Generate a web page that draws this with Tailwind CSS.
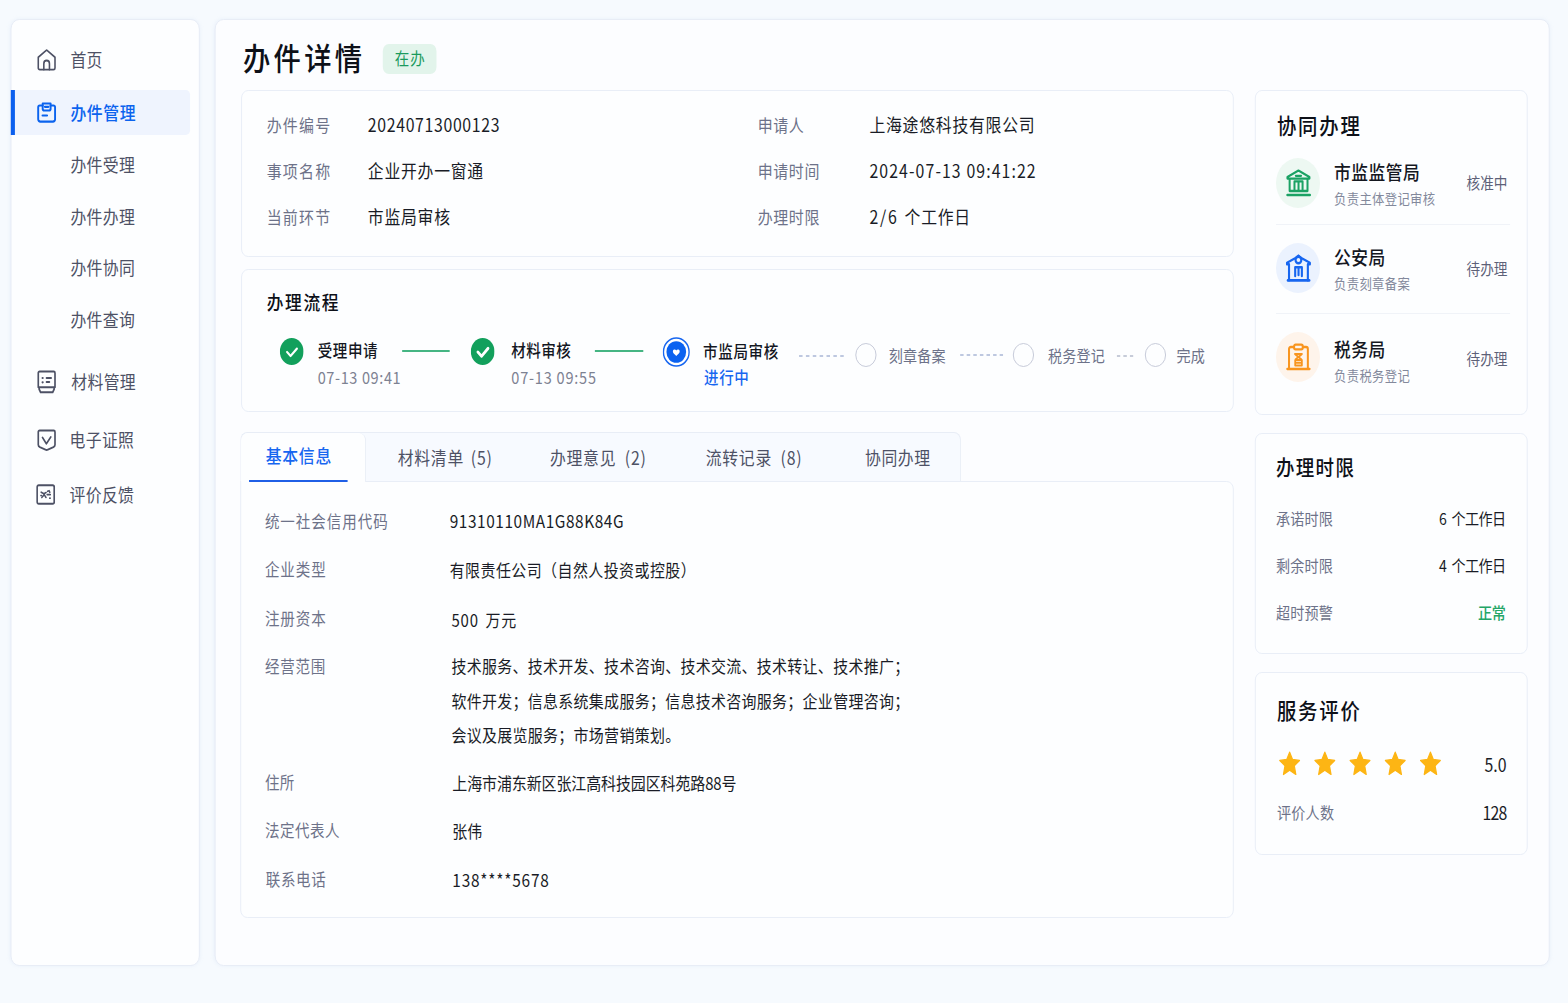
<!DOCTYPE html>
<html lang="zh-CN">
<head>
  <meta charset="UTF-8">
  <meta name="viewport" content="width=device-width, initial-scale=1.0">
  <title>办件详情</title>
  <script src="https://cdn.jsdelivr.net/npm/@tailwindcss/browser@4"></script>
</head>
<body class="h-[1003px] overflow-hidden bg-[#f6fafe] font-['Noto_Sans_CJK_SC',sans-serif] text-[#191c26]">
  <!-- The layout is condensed horizontally -->
  <div class="flex h-[1003px] w-[1781px] origin-top-left scale-x-[0.88] items-start gap-[17px] pt-[19px] pl-[12px]">

    <!-- Sidebar -->
    <nav class="h-[947px] w-[215px] shrink-0 rounded-[10px] border border-[#e6ecf5] bg-[#fdfeff] pt-[9px] text-[18px] tracking-[0.4px] text-[#4d5165] shadow-[0_0_4px_rgba(200,215,240,0.25)]">
      <a class="flex h-[61px] items-center gap-4 pl-[29px]">
        <svg class="h-[22px] w-[22px]" viewBox="0 0 22 22" fill="none" stroke="currentColor" stroke-width="1.8" stroke-linejoin="round" stroke-linecap="round"><path d="M1.5 8.2 10.2 1.6a1.3 1.3 0 0 1 1.6 0L20.5 8.2V19a1.7 1.7 0 0 1-1.7 1.7H3.2A1.7 1.7 0 0 1 1.5 19z"/><path d="M7.8 20.5v-5.8a3.2 3.2 0 0 1 6.4 0v5.8"/></svg>
        <span class="pb-px">首页</span>
      </a>
      <a class="-ml-px flex h-[45px] w-[204px] items-center gap-4 rounded-r-[5px] border-l-[5px] border-[#0b5fee] bg-[#eff4fe] pl-[25px] font-medium tracking-[0.7px] text-[#0b63ee]">
        <svg class="h-[22px] w-[22px]" viewBox="0 0 22 22" fill="none" stroke="currentColor" stroke-width="2.2" stroke-linejoin="round" stroke-linecap="round"><path d="M6.5 3.5H3.2a1.8 1.8 0 0 0-1.8 1.8v11.9a2.4 2.4 0 0 0 2.4 2.4h14.4a2.4 2.4 0 0 0 2.4-2.4V5.3a1.8 1.8 0 0 0-1.8-1.8h-3.3"/><path d="M6.5 1.5h9v5.3a1.7 1.7 0 0 1-1.7 1.7H8.2a1.7 1.7 0 0 1-1.7-1.7zM9 4.8h4M6.3 13.5h5.2"/></svg>
        <span class="pb-px">办件管理</span>
      </a>
      <div class="mt-[4px] pl-[67px]">
        <a class="flex h-[51.5px] items-center">办件受理</a>
        <a class="flex h-[51.5px] items-center">办件办理</a>
        <a class="flex h-[51.5px] items-center">办件协同</a>
        <a class="flex h-[51.5px] items-center">办件查询</a>
      </div>
      <a class="mt-[9px] flex h-[56px] items-center gap-4 pl-[29px]">
        <svg class="h-[24px] w-[22px]" viewBox="0 0 22 24" fill="none" stroke="currentColor" stroke-width="1.9" stroke-linejoin="round" stroke-linecap="round"><path d="M3 1.5h16a1.5 1.5 0 0 1 1.5 1.5v14.2h-19V3A1.5 1.5 0 0 1 3 1.5zM2.5 17.5v1.7l1.6 3.1h13.8l1.6-3.1v-1.7"/><path stroke-width="2.2" d="M6.3 8h.3M6.3 12.3h.3M11 8h5M11 12h3"/></svg>
        <span class="pb-px pl-px">材料管理</span>
      </a>
      <a class="flex h-[60px] items-center gap-4 pl-[29px]">
        <svg class="h-[22px] w-[22px]" viewBox="0 0 22 22" fill="none" stroke="currentColor" stroke-width="1.9" stroke-linejoin="round" stroke-linecap="round"><path d="M3 1.5h16a1.5 1.5 0 0 1 1.5 1.5v12.8c0 1.2-.7 1.9-1.8 2.4l-6.3 2.5a4 4 0 0 1-2.8 0l-6.3-2.5c-1.1-.5-1.8-1.2-1.8-2.4V3A1.5 1.5 0 0 1 3 1.5z"/><path d="m6.3 8.5 4.4 6.2 5-6.7"/></svg>
        <span class="-ml-px pb-px">电子证照</span>
      </a>
      <a class="flex h-[49px] items-center gap-4 pl-[28px]">
        <svg class="h-[21px] w-[22px]" viewBox="0 0 22 21" fill="none" stroke="currentColor" stroke-width="1.9" stroke-linejoin="round" stroke-linecap="round"><rect x="1.2" y="1.2" width="19.4" height="18.6" rx="1.8"/><path stroke-width="1.7" d="m5.8 8.2 3 1.6 2.6-1.2M6.5 13.5l2.8-2.8 2 2.7M13 7.3l1.8-.6.8 1.6M12.6 10.6h3.6M15.5 14.2h.5M5.5 11.5h.6"/></svg>
        <span class="pb-px">评价反馈</span>
      </a>
    </nav>

    <!-- Content -->
    <main class="h-[947px] w-[1517px] shrink-0 rounded-[10px] border border-[#e6ecf5] bg-[#fcfdff] pl-[29px] shadow-[0_0_4px_rgba(200,215,240,0.25)]">
      <header class="flex h-[70px] items-center gap-[20px] pt-[6px] pl-[2px]">
        <h1 class="pb-[2px] text-[31px] leading-[40px] font-medium tracking-[3.8px] text-[#0d1018]">办件详情</h1>
        <span class="mt-px flex h-[30px] w-[61px] items-center justify-center rounded-[7px] bg-[#e2f4eb] pl-px text-[16.5px] tracking-[1px] text-[#1b9a5d]">在办</span>
      </header>

      <div class="flex items-start gap-[24px]">
        <div class="w-[1128px] shrink-0">
          <!-- Summary -->
          <section class="grid h-[167px] auto-rows-[46px] grid-cols-[114px_444px_126px_1fr] items-center rounded-[8px] border border-[#e8edf6] bg-[#fdfeff] pt-[10px] pl-[28px] text-[18px] tracking-[0.85px]">
            <span class="pt-px text-[17px] tracking-[1.4px] text-[#6d7289]">办件编号</span><span class="pl-px tracking-[0.75px]">20240713000123</span>
            <span class="pt-px text-[17px] tracking-[0.7px] text-[#6d7289]">申请人</span><span class="pl-px">上海途悠科技有限公司</span>
            <span class="pt-px text-[17px] tracking-[1.4px] text-[#6d7289]">事项名称</span><span class="pl-px">企业开办一窗通</span>
            <span class="pt-px text-[17px] tracking-[0.7px] text-[#6d7289]">申请时间</span><span class="pl-px tracking-[1.25px]">2024-07-13 09:41:22</span>
            <span class="pt-px text-[17px] tracking-[1.4px] text-[#6d7289]">当前环节</span><span class="pl-px">市监局审核</span>
            <span class="pt-px text-[17px] tracking-[0.7px] text-[#6d7289]">办理时限</span><span class="pl-px"><span class="tracking-[2px]">2/6</span> <span class="pl-[2px]">个工作日</span></span>
          </section>

          <!-- Progress -->
          <section class="mt-[12px] h-[143px] rounded-[8px] border border-[#e8edf6] bg-[#fdfeff] pt-[18px]">
            <h2 class="pl-[28px] text-[19px] leading-[28px] font-medium tracking-[1.9px] text-[#0d1018]">办理流程</h2>
            <div class="mt-[21px] flex items-start pl-[43px] text-[16.5px] leading-[27px] tracking-[0.7px] whitespace-nowrap">
              <svg class="mt-px h-[27px] w-[27px] shrink-0" viewBox="0 0 27 27"><circle cx="13.5" cy="13.5" r="13.5" fill="#12a05c"/><path d="m8.2 14 4 4 7.2-7.4" fill="none" stroke="#fff" stroke-width="2.3" stroke-linecap="round" stroke-linejoin="round"/></svg>
              <div class="ml-[16px] w-[96px] shrink-0">
                <div class="font-medium text-[#14171f]">受理申请</div>
                <div class="text-[#7d8292]">07-13 09:41</div>
              </div>
              <div class="mt-[13px] h-[2px] w-[54px] shrink-0 bg-[#45b583]"></div>
              <svg class="mt-px ml-[24px] h-[27px] w-[27px] shrink-0" viewBox="0 0 27 27"><circle cx="13.5" cy="13.5" r="13.5" fill="#12a05c"/><path d="m8 14 4.2 4.2 7.4-7.8" fill="none" stroke="#fff" stroke-width="3" stroke-linecap="round" stroke-linejoin="round"/></svg>
              <div class="ml-[19px] w-[95px] shrink-0">
                <div class="font-medium tracking-[0.5px] text-[#14171f]">材料审核</div>
                <div class="tracking-[0.9px] text-[#7d8292]">07-13 09:55</div>
              </div>
              <div class="mt-[13px] h-[2px] w-[55px] shrink-0 bg-[#45b583]"></div>
              <svg class="ml-[22px] h-[30px] w-[31px] shrink-0" viewBox="0 0 31 30"><ellipse cx="15.5" cy="15" rx="14.6" ry="14" fill="#fff" stroke="#1766f0" stroke-width="1.6"/><ellipse cx="15.5" cy="15" rx="11.2" ry="10.8" fill="#0b62f0"/><path d="M11.6 14.3c0-2.2 3-2.5 3.9-.9.9-1.6 3.9-1.3 3.9.9 0 2-2.1 3.3-3.9 4.6-1.8-1.3-3.9-2.6-3.9-4.6z" fill="#fff"/></svg>
              <div class="ml-[15px] w-[109px] shrink-0 font-medium">
                <div class="pt-px text-[#14171f]">市监局审核</div>
                <div class="-mt-px pl-px text-[#1766f0]">进行中</div>
              </div>
              <svg class="mt-[18px] h-[2px] w-[51px] shrink-0" viewBox="0 0 51 2"><path d="M0 1h51" stroke="#a9b7d6" stroke-width="1.6" stroke-dasharray="4 3.8"/></svg>
              <div class="mt-[6px] ml-[13px] h-[24px] w-[24px] shrink-0 rounded-full border border-[#c3c8d6]"></div>
              <div class="mt-[5px] ml-[14px] w-[81px] shrink-0 text-[16px] tracking-[0.2px] text-[#6d7289]">刻章备案</div>
              <svg class="mt-[17px] h-[2px] w-[49px] shrink-0" viewBox="0 0 49 2"><path d="M0 1h49" stroke="#a9b7d6" stroke-width="1.6" stroke-dasharray="4 3.5"/></svg>
              <div class="mt-[6px] ml-[11px] h-[24px] w-[24px] shrink-0 rounded-full border border-[#c3c8d6]"></div>
              <div class="mt-[5px] ml-[16px] w-[78px] shrink-0 text-[16px] tracking-[0.2px] text-[#6d7289]">税务登记</div>
              <svg class="mt-[18px] h-[2px] w-[19px] shrink-0" viewBox="0 0 19 2"><path d="M0 1h19" stroke="#b5bccd" stroke-width="1.6" stroke-dasharray="4 3.5"/></svg>
              <div class="mt-[6px] ml-[13px] h-[24px] w-[24px] shrink-0 rounded-full border border-[#c3c8d6]"></div>
              <div class="mt-[5px] ml-[12px] text-[16px] tracking-[0px] text-[#6d7289]">完成</div>
            </div>
          </section>

          <!-- Tabs -->
          <div class="mt-[20px] -ml-px flex h-[50px] w-[819px] rounded-t-[8px] border border-b-0 border-[#e8edf6] bg-[#f7faff] text-[18px] leading-[49px] tracking-[0.8px] whitespace-nowrap text-[#4d5165] [word-spacing:3px]">
            <div class="flex w-[142px] shrink-0 flex-col rounded-t-[8px] border-r border-[#e8edf6] bg-[#fdfeff] pl-[9px]">
              <span class="h-[47px] pl-[19px] leading-[45px] font-medium text-[#1766f0]">基本信息</span>
              <span class="z-10 h-[2.5px] w-[112px] bg-[#1f5fe6]"></span>
            </div>
            <span class="w-[173px] shrink-0 pl-[36px]">材料清单 (5)</span>
            <span class="w-[177px] shrink-0 pl-[36px] [word-spacing:5px]">办理意见 (2)</span>
            <span class="w-[181px] shrink-0 pl-[36px] [word-spacing:5px]">流转记录 (8)</span>
            <span class="pl-[36px] tracking-[0.6px]">协同办理</span>
          </div>

          <!-- Basic info -->
          <section class="-mt-px -ml-px h-[437px] w-[1129px] rounded-[8px] rounded-tl-none border border-[#e8edf6] bg-[#fdfeff] pt-[15px] pl-[27px] text-[17px] tracking-[0.5px]">
            <div class="flex h-[48px] items-center"><span class="w-[210px] text-[16.5px] tracking-[1.1px] text-[#6d7289]">统一社会信用代码</span><span class="pt-px text-[17.5px] tracking-[0.65px]">91310110MA1G88K84G</span></div>
            <div class="flex h-[48px] items-center"><span class="w-[210px] text-[16.5px] tracking-[1.1px] text-[#6d7289]">企业类型</span><span class="pt-px">有限责任公司（自然人投资或控股）</span></div>
            <div class="flex h-[49px] items-center"><span class="w-[212px] pt-px text-[16.5px] tracking-[1.1px] text-[#6d7289]">注册资本</span><span class="pt-[4px] tracking-[0.9px] [word-spacing:3px]">500 万元</span></div>
            <div class="mt-[7px] flex leading-[34.5px]">
              <span class="w-[212px] text-[16.5px] tracking-[0.9px] text-[#6d7289]">经营范围</span>
              <p class="tracking-[0.35px]">技术服务、技术开发、技术咨询、技术交流、技术转让、技术推广；<br>软件开发；信息系统集成服务；信息技术咨询服务；企业管理咨询；<br>会议及展览服务；市场营销策划。</p>
            </div>
            <div class="mt-[6px] flex h-[48px] items-center"><span class="w-[212px] text-[16.5px] text-[#6d7289]">住所</span><span class="pl-px tracking-[-0.1px]">上海市浦东新区张江高科技园区科苑路88号</span></div>
            <div class="flex h-[48px] items-center"><span class="w-[212px] text-[16.5px] tracking-[0.6px] text-[#6d7289]">法定代表人</span><span class="pl-px tracking-[0]">张伟</span></div>
            <div class="flex h-[49px] items-center"><span class="w-[212px] pt-px pl-px text-[16.5px] tracking-[0.7px] text-[#6d7289]">联系电话</span><span class="pt-[3px] pl-px text-[17.5px] tracking-[0.9px]">138****5678</span></div>
          </section>
        </div>

        <!-- Right column -->
        <aside class="-mt-[0.5px] w-[310px] shrink-0">
          <section class="h-[325px] rounded-[8px] border border-[#e8edf6] bg-[#fdfeff] pt-[16px] pr-[19px] pl-[23px]">
            <h2 class="mb-px pl-px text-[22px] leading-[35px] font-medium tracking-[2.1px] text-[#0d1018]">协同办理</h2>
            <div class="flex h-[82px] items-center border-b border-[#f0f3f8] pr-[3px]">
              <span class="flex h-[50px] w-[50px] items-center justify-center rounded-full bg-[#edf8f2] text-[#1ba264]">
                <svg class="h-[28px] w-[29px]" viewBox="0 0 29 28" fill="none" stroke="currentColor" stroke-width="2.3" stroke-linecap="round" stroke-linejoin="round"><path d="M2 8 14.5 1.6 27 8v1.6H2zM4.5 10v11.5M24.8 10v11.5M4.5 22h20.3M10 12.4V22M14.6 12.4V22M19.2 12.4V22M10 12.4h9.2M11.5 6.8h6"/><path stroke-width="2.6" d="M2 26h25.5"/></svg>
              </span>
              <div class="ml-[16px] pt-[2px] whitespace-nowrap">
                <div class="text-[19px] leading-[27px] font-medium tracking-[0.6px] text-[#14171f]">市监监管局</div>
                <div class="text-[14px] leading-[26px] tracking-[0.4px] text-[#83899c]">负责主体登记审核</div>
              </div>
              <span class="ml-auto pb-px text-[15.5px] text-[#5d6178]">核准中</span>
            </div>
            <div class="flex h-[89px] items-center border-b border-[#f0f3f8] pr-[3px]">
              <span class="mb-[2px] flex h-[50px] w-[50px] items-center justify-center rounded-full bg-[#ebf2fe] text-[#1766f0]">
                <svg class="h-[28px] w-[29px]" viewBox="0 0 29 28" fill="none" stroke="currentColor" stroke-width="2.4" stroke-linecap="round" stroke-linejoin="round"><path d="m10.7 4.2-9.2 4.6v1.4h2.3v16M18.3 4.2l9.2 4.6v1.4h-2.3v16M11 4.2l3.5-2.6L18 4.2"/><circle cx="14.5" cy="6" r="3.3"/><path d="M10.8 22V13.2h7.6V22M14.6 13.5V21"/><path stroke-width="2.6" d="M2.5 26.4h24.3"/></svg>
              </span>
              <div class="ml-[16px] pt-[2px] whitespace-nowrap">
                <div class="text-[19px] leading-[27px] font-medium tracking-[0.6px] text-[#14171f]">公安局</div>
                <div class="text-[14px] leading-[26px] tracking-[0.4px] text-[#83899c]">负责刻章备案</div>
              </div>
              <span class="ml-auto pt-px text-[15.5px] text-[#5d6178]">待办理</span>
            </div>
            <div class="flex h-[87px] items-center pr-[3px]">
              <span class="flex h-[50px] w-[50px] items-center justify-center rounded-full bg-[#fef4eb] text-[#f8951f]">
                <svg class="h-[28px] w-[29px]" viewBox="0 0 29 28" fill="none" stroke="currentColor" stroke-width="2.3" stroke-linecap="round" stroke-linejoin="round"><path d="M9.5 4H5.8a2 2 0 0 0-2 2v19.5M19.5 4h3.7a2 2 0 0 1 2 2v19.5M1.8 26h25.4"/><rect x="9.6" y="1.6" width="9.8" height="4.8" rx="1.6"/><path stroke-width="2" d="M10.5 11h8M11 11.5l7 5M18 11.5l-7 5M10.8 17h7.6v5.6h-7.6zM11 19.8h7"/></svg>
              </span>
              <div class="ml-[16px] pt-[8px] whitespace-nowrap">
                <div class="text-[19px] leading-[27px] font-medium tracking-[0.6px] text-[#14171f]">税务局</div>
                <div class="text-[14px] leading-[26px] tracking-[0.4px] text-[#83899c]">负责税务登记</div>
              </div>
              <span class="ml-auto pt-[3px] text-[15.5px] text-[#5d6178]">待办理</span>
            </div>
          </section>

          <section class="mt-[18px] h-[221px] rounded-[8px] border border-[#e8edf6] bg-[#fdfeff] pt-[15px] pr-[24px] pl-[23px]">
            <h2 class="text-[21px] leading-[35px] font-medium tracking-[1.5px] text-[#0d1018]">办理时限</h2>
            <div class="mt-[11px] text-[16px] tracking-[0.2px]">
              <div class="flex h-[47px] items-center justify-between"><span class="text-[#6d7289]">承诺时限</span><span class="tracking-[-0.6px]">6&nbsp; 个工作日</span></div>
              <div class="flex h-[47px] items-center justify-between"><span class="text-[#6d7289]">剩余时限</span><span class="tracking-[-0.6px]">4&nbsp; 个工作日</span></div>
              <div class="flex h-[47px] items-center justify-between"><span class="text-[#6d7289]">超时预警</span><span class="font-medium tracking-[-0.3px] text-[#23a566]">正常</span></div>
            </div>
          </section>

          <section class="mt-[18px] h-[183px] rounded-[8px] border border-[#e8edf6] bg-[#fdfeff] pt-[19px] pr-[23px] pl-[24px]">
            <h2 class="text-[22px] leading-[35px] font-medium tracking-[2.1px] text-[#0d1018]">服务评价</h2>
            <div class="mt-[14px] flex h-[48px] items-center justify-between">
              <div class="mb-[3px] flex gap-[15px] pl-[2px] text-[#fdb514]">
                <svg class="h-[25px] w-[25px]" viewBox="0 0 25 25" fill="currentColor" stroke="currentColor" stroke-width="1.4" stroke-linejoin="round"><path d="m12.5 1.2 3.3 7.3 7.9.9-5.9 5.4 1.7 8.6-7-4.2-7 4.2 1.7-8.6-5.9-5.4 7.9-.9z"/></svg>
                <svg class="h-[25px] w-[25px]" viewBox="0 0 25 25" fill="currentColor" stroke="currentColor" stroke-width="1.4" stroke-linejoin="round"><path d="m12.5 1.2 3.3 7.3 7.9.9-5.9 5.4 1.7 8.6-7-4.2-7 4.2 1.7-8.6-5.9-5.4 7.9-.9z"/></svg>
                <svg class="h-[25px] w-[25px]" viewBox="0 0 25 25" fill="currentColor" stroke="currentColor" stroke-width="1.4" stroke-linejoin="round"><path d="m12.5 1.2 3.3 7.3 7.9.9-5.9 5.4 1.7 8.6-7-4.2-7 4.2 1.7-8.6-5.9-5.4 7.9-.9z"/></svg>
                <svg class="h-[25px] w-[25px]" viewBox="0 0 25 25" fill="currentColor" stroke="currentColor" stroke-width="1.4" stroke-linejoin="round"><path d="m12.5 1.2 3.3 7.3 7.9.9-5.9 5.4 1.7 8.6-7-4.2-7 4.2 1.7-8.6-5.9-5.4 7.9-.9z"/></svg>
                <svg class="h-[25px] w-[25px]" viewBox="0 0 25 25" fill="currentColor" stroke="currentColor" stroke-width="1.4" stroke-linejoin="round"><path d="m12.5 1.2 3.3 7.3 7.9.9-5.9 5.4 1.7 8.6-7-4.2-7 4.2 1.7-8.6-5.9-5.4 7.9-.9z"/></svg>
              </div>
              <span class="pb-px text-[18px]">5.0</span>
            </div>
            <div class="flex h-[48px] items-center justify-between pb-px"><span class="text-[16px] tracking-[0.3px] text-[#6d7289]">评价人数</span><span class="text-[18px] tracking-[-0.9px]">128</span></div>
          </section>
        </aside>
      </div>
    </main>
  </div>
</body>
</html>
